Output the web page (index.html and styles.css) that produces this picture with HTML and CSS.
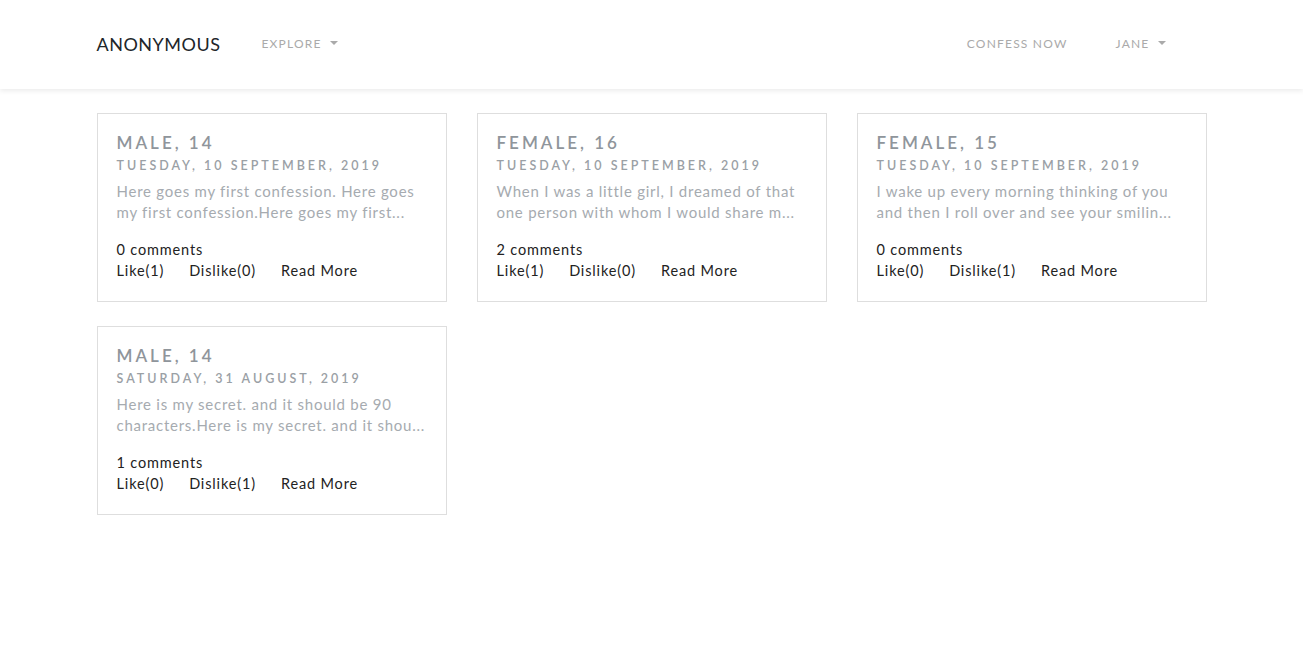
FILE: index.html
```html
<!DOCTYPE html>
<html lang="en">
<head>
  <meta charset="UTF-8">
  <meta name="viewport" content="width=device-width, initial-scale=1.0">
  <title>Anonymous</title>
  <link rel="stylesheet" href="styles.css">
</head>
<body>
  <nav class="navbar">
    <div class="nav-inner">
      <a class="brand" href="#">ANONYMOUS</a>
      <a class="nav-link dropdown" href="#">EXPLORE</a>
      <div class="nav-right">
        <a class="nav-link" href="#">CONFESS NOW</a>
        <a class="nav-link dropdown" href="#">JANE</a>
      </div>
    </div>
  </nav>

  <main class="container">
    <div class="card">
      <h2 class="who">MALE, 14</h2>
      <div class="date">TUESDAY, 10 SEPTEMBER, 2019</div>
      <p class="text">Here goes my first confession. Here goes my first confession.Here goes my first...</p>
      <div class="comments">0 comments</div>
      <div class="actions">
        <a href="#">Like(1)</a>
        <a href="#">Dislike(0)</a>
        <a href="#">Read More</a>
      </div>
    </div>

    <div class="card">
      <h2 class="who">FEMALE, 16</h2>
      <div class="date">TUESDAY, 10 SEPTEMBER, 2019</div>
      <p class="text">When I was a little girl, I dreamed of that one person with whom I would share m...</p>
      <div class="comments">2 comments</div>
      <div class="actions">
        <a href="#">Like(1)</a>
        <a href="#">Dislike(0)</a>
        <a href="#">Read More</a>
      </div>
    </div>

    <div class="card">
      <h2 class="who">FEMALE, 15</h2>
      <div class="date">TUESDAY, 10 SEPTEMBER, 2019</div>
      <p class="text">I wake up every morning thinking of you and then I roll over and see your smilin...</p>
      <div class="comments">0 comments</div>
      <div class="actions">
        <a href="#">Like(0)</a>
        <a href="#">Dislike(1)</a>
        <a href="#">Read More</a>
      </div>
    </div>

    <div class="card">
      <h2 class="who">MALE, 14</h2>
      <div class="date">SATURDAY, 31 AUGUST, 2019</div>
      <p class="text">Here is my secret. and it should be 90 characters.Here is my secret. and it shou...</p>
      <div class="comments">1 comments</div>
      <div class="actions">
        <a href="#">Like(0)</a>
        <a href="#">Dislike(1)</a>
        <a href="#">Read More</a>
      </div>
    </div>
  </main>
</body>
</html>
```

FILE: styles.css
```css
body {
  margin: 0;
  font-family: 'Lato', 'Noto Sans', sans-serif;
  color: #212529;
  background: #ffffff;
}

a {
  text-decoration: none;
  color: inherit;
}

.navbar {
  height: 89px;
  background: #ffffff;
  box-shadow: 0 2px 5px rgba(0, 0, 0, 0.08);
}

.nav-inner {
  width: 1110px;
  margin: 0 auto;
  height: 100%;
  display: flex;
  align-items: center;
}

.brand {
  font-size: 18px;
  letter-spacing: 0.5px;
  color: #212529;
  margin-right: 41px;
  margin-top: -2px;
}

.nav-link {
  font-size: 12px;
  letter-spacing: 1.2px;
  color: #aaaaaa;
  margin-top: -2px;
}

.nav-right {
  margin-left: auto;
  margin-right: 41px;
  display: flex;
  gap: 48px;
}

.dropdown::after {
  content: "";
  display: inline-block;
  margin-left: 8px;
  vertical-align: 3px;
  border-top: 4px solid #aaaaaa;
  border-left: 4px solid transparent;
  border-right: 4px solid transparent;
}

.container {
  width: 1110px;
  margin: 24px auto 0;
  display: grid;
  grid-template-columns: repeat(3, 350px);
  column-gap: 30px;
  row-gap: 24px;
}

.card {
  border: 1px solid #dedede;
  padding: 18px 19px 20px 19px;
  height: 149px;
}

.who {
  margin: 0;
  font-size: 17px;
  font-weight: 600;
  letter-spacing: 3px;
  color: #8f959b;
  line-height: 22px;
}

.date {
  font-size: 12.5px;
  font-weight: 600;
  letter-spacing: 3px;
  color: #9aa0a5;
  line-height: 18px;
  margin-top: 3px;
}

.text {
  margin: 6px 0 16px;
  font-size: 15px;
  line-height: 21px;
  letter-spacing: 0.75px;
  color: #a6abb0;
}

.comments,
.actions {
  font-size: 14.5px;
  letter-spacing: 0.85px;
  line-height: 21px;
  color: #222222;
}

.actions {
  display: flex;
  gap: 25px;
}
```
